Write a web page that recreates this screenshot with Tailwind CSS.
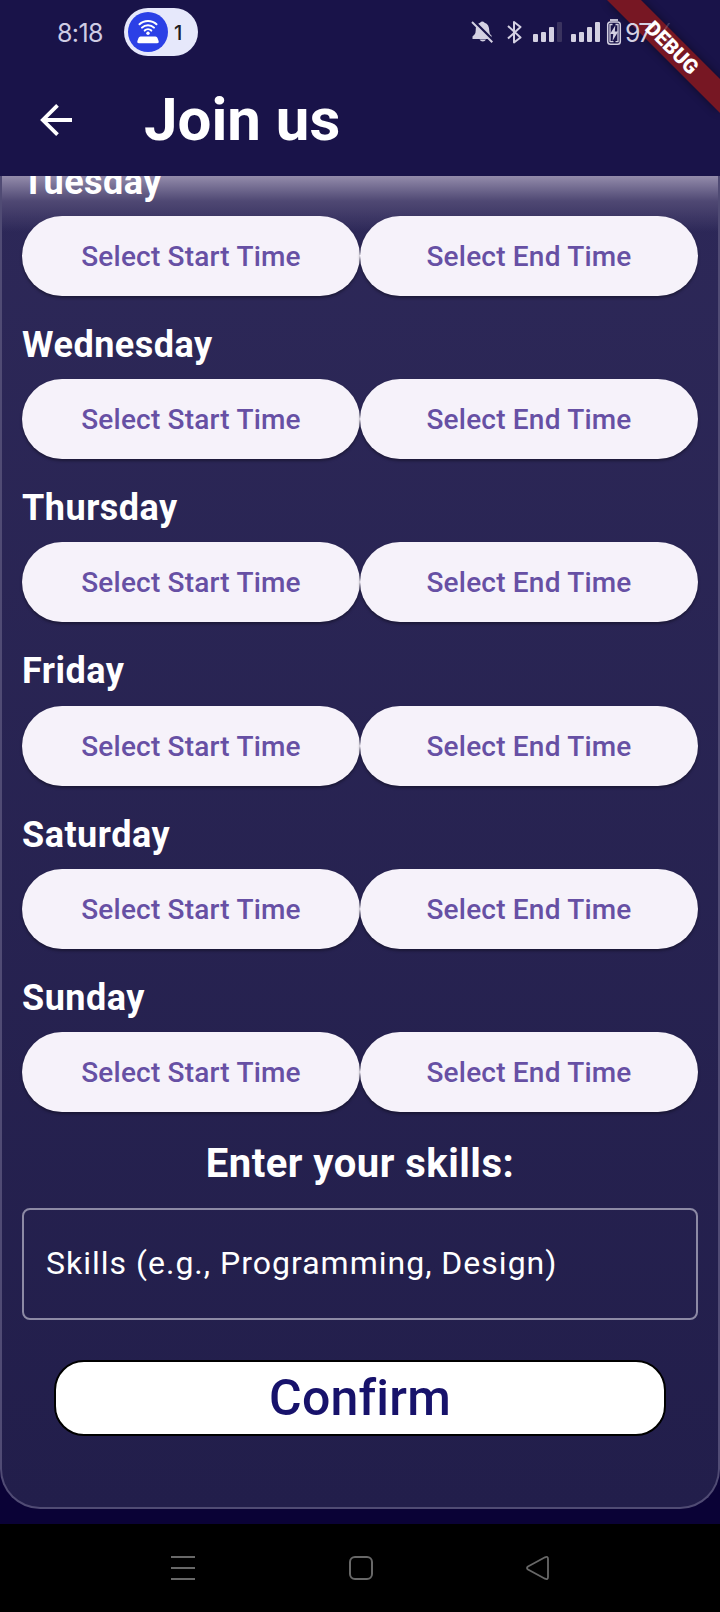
<!DOCTYPE html>
<html lang="en">
<head>
<meta charset="utf-8">
<title>Join us</title>
<script src="https://cdn.jsdelivr.net/npm/@tailwindcss/browser@4"></script>
</head>
<body class="bg-black font-['Roboto',sans-serif]">
<div class="relative flex h-[1612px] w-[720px] flex-col overflow-hidden bg-black">

  <header class="flex h-[176px] shrink-0 flex-col bg-[#191349]">
    <div class="flex h-16 items-center pl-[57px]">
      <span class="w-[67px] pt-[2px] font-['Inter','Roboto',sans-serif] text-[25px] leading-none tracking-[-0.6px] text-[#cfcce4]">8:18</span>
      <div class="flex h-12 w-[74px] items-center rounded-full bg-[#e6e8fb] pl-1">
        <svg class="size-10" viewBox="0 0 40 40" fill="none">
          <circle cx="20" cy="20" r="20" fill="#2b40e6"/>
          <g stroke="#fff" stroke-width="2" stroke-linecap="round">
            <path d="M11.500 12.300C16 7.800 24 7.800 28.500 12.300"/>
            <path d="M14 15.600C17.200 12.400 22.800 12.400 26 15.600"/>
            <path d="M16.700 18.600C18.500 16.900 21.500 16.900 23.300 18.600"/>
          </g>
          <circle cx="20" cy="21.300" r="1.700" fill="#fff"/>
          <path d="M12.500 24.500h15q1.500 0 2 1.500l1.200 3.300q.5 1.900-1.500 1.900H10.800q-2 0-1.500-1.900l1.200-3.300q.5-1.500 2-1.500z" fill="#fff"/>
        </svg>
        <span class="ml-[6px] pt-px font-['Inter','Roboto',sans-serif] text-[20px] font-medium leading-none text-[#1d1d24]">1</span>
      </div>
      <svg class="ml-[272px] h-12 w-[154px]" viewBox="470 8 154 48" fill="none">
        <g fill="#d4d1e2">
          <path d="M474.500 34.500q1.200-1 1.200-4q0-6.500 4.300-7.800q2.300-2.400 4.600 0q4.700 1.600 4.700 8.300q0 3 2.200 4.500v3.500h-19v-2.500z"/>
          <path d="M479.500 39.500h6.500q-1 2-3.200 2t-3.300-2z"/>
        </g>
        <path d="M473.500 21l20 20" stroke="#191349" stroke-width="3"/>
        <path d="M472 22l20.300 20.300" stroke="#d4d1e2" stroke-width="2"/>
        <path d="M508 26l12.500 11.500l-6.500 5V22l6.500 5L508 38.500" stroke="#d4d1e2" stroke-width="2" stroke-linejoin="round"/>
        <g fill="#d4d1e2">
          <rect x="533" y="34" width="5" height="8" rx="1"/>
          <rect x="541" y="32" width="5" height="10" rx="1"/>
          <rect x="549" y="27" width="5" height="15" rx="1"/>
          <rect x="557" y="22" width="5" height="20" rx="1" fill="#3a335f"/>
          <rect x="571" y="34" width="5" height="8" rx="1"/>
          <rect x="579" y="32" width="5" height="10" rx="1"/>
          <rect x="587" y="27" width="5" height="15" rx="1"/>
          <rect x="595" y="22" width="5" height="20" rx="1"/>
        </g>
        <path d="M610 20h8" stroke="#d4d1e2" stroke-width="1.800"/>
        <rect x="607.700" y="22" width="12.600" height="22.200" rx="2.800" stroke="#d4d1e2" stroke-width="1.500"/>
        <path d="M612.500 24.500H610v17.200h3.500M615.500 24.500H618v17.200h-2.500" stroke="#d4d1e2" stroke-width="1.300"/>
        <path d="M615.300 25.500l-5.300 8.500h3.300l-.8 7l5.700-9.500h-3.400z" fill="#d4d1e2"/>
      </svg>
    </div>
    <div class="flex h-28 items-center pl-10">
      <svg class="h-8 w-8" viewBox="0 0 32 32" fill="none" stroke="#fff" stroke-width="3.800"><path d="M17.500 1.400L2.800 16l14.700 14.600M2.800 16H32"/></svg>
      <h1 class="ml-[72px] text-[60px] font-bold leading-[72px] text-white">Join us</h1>
    </div>
  </header>

  <main class="h-[1348px] shrink-0 overflow-hidden bg-[#0a0236]">
    <div class="relative h-[1333px] overflow-hidden rounded-b-[40px] border-x-2 border-b-2 border-[#504b74] bg-linear-to-b from-[#2d2858] to-[#221e4b]">
      <div class="absolute inset-x-0 top-0 h-14 bg-linear-to-b from-[#948cab] via-[#4f4873] via-45% to-[#2e2959]/0"></div>
      <div id="days" class="relative -mt-[19.2px] px-5"></div>

      <h2 class="relative -mt-[1px] text-center text-[40px] font-bold leading-[57px] tracking-[0.5px] text-white">Enter your skills:</h2>
      <div class="mx-5 mt-[16px] flex h-[112px] items-center rounded-[8px] border-2 border-[#8d8aa5] pb-[2px] pl-[22px] text-[32px] tracking-[1px] text-white">Skills (e.g., Programming, Design)</div>
      <div class="mx-[52px] mt-[40.500px] flex h-[76px] items-center justify-center rounded-[30px] border-2 border-black bg-white text-[50px] font-medium tracking-[0.2px] text-[#17126b]">Confirm</div>
    </div>
  </main>

  <nav class="flex h-[88px] shrink-0 items-center">
    <svg class="h-[88px] w-[720px]" viewBox="0 1524 720 88" fill="none" stroke="#686868" stroke-width="2">
      <path d="M171 1557h24M171 1568h24M171 1579h24"/>
      <rect x="350" y="1557" width="22" height="22" rx="5"/>
      <path d="M528 1566.500L545 1557.300Q548 1556 548 1559V1577Q548 1580 545 1578.700L528 1569.500Q526 1568 528 1566.500z" stroke-width="1.800"/>
    </svg>
  </nav>

  <svg class="absolute right-0 top-0 h-[140px] w-[140px]" viewBox="580 0 140 140">
    <defs><filter id="soft" x="-20%" y="-20%" width="140%" height="140%"><feGaussianBlur stdDeviation="5"/></filter></defs>
    <path d="M607 0H641L720 79V113z" fill="#000" opacity=".45" filter="url(#soft)"/>
    <path d="M607 0H641L720 79V113z" fill="#771723"/>
    <text x="625" y="41.500" font-family="Inter, Roboto, sans-serif" font-size="25" letter-spacing="-1.700" fill="#d4d1e2">97<tspan opacity=".5" fill="#d4d1e2" fill-opacity=".4">%</tspan></text>
    <text transform="translate(672.200 47.500) rotate(45)" x="0" y="7.200" text-anchor="middle" font-family="Roboto, sans-serif" font-weight="900" font-size="20.400" fill="#fff">DEBUG</text>
  </svg>
</div>

<template id="day">
  <section class="h-[163.2px]">
    <h3 class="h-[59.2px] text-[36px] font-bold leading-[51.4px] tracking-[0.5px] text-white"></h3>
    <div class="grid grid-cols-2">
      <button class="h-20 rounded-full bg-[#f6f2fa] pt-[2px] text-[28px] font-medium tracking-[0.2px] text-[#6750a4] shadow-[0_2px_3px_rgba(0,0,0,0.35)]">Select Start Time</button>
      <button class="h-20 rounded-full bg-[#f6f2fa] pt-[2px] text-[28px] font-medium tracking-[0.2px] text-[#6750a4] shadow-[0_2px_3px_rgba(0,0,0,0.35)]">Select End Time</button>
    </div>
  </section>
</template>
<script>
  const list = document.getElementById('days');
  const tpl = document.getElementById('day');
  ['Tuesday', 'Wednesday', 'Thursday', 'Friday', 'Saturday', 'Sunday'].forEach(d => {
    const row = tpl.content.cloneNode(true);
    row.querySelector('h3').textContent = d;
    list.appendChild(row);
  });
</script>
</body>
</html>
